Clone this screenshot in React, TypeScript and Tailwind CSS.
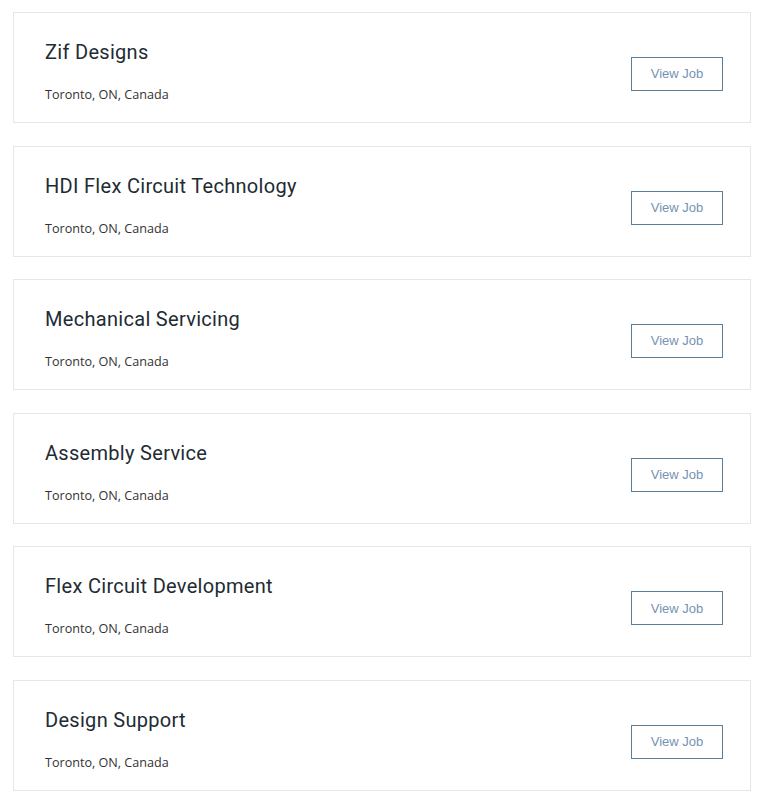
const jobs = [
  "Zif Designs",
  "HDI Flex Circuit Technology",
  "Mechanical Servicing",
  "Assembly Service",
  "Flex Circuit Development",
  "Design Support",
];

export default function App() {
  return (
    <div className="min-h-[800px] bg-white pt-[12px]">
      <div className="ml-[13px] flex w-[738px] flex-col gap-[22.6px]">
        {jobs.map((title) => (
          <div
            key={title}
            className="flex h-[111px] items-start justify-between border border-[#e6e6e6] bg-white pl-[31px] pr-[27px]"
          >
            <div className="pt-[26px]">
              <h2 className="text-[20px] leading-[26px] tracking-[0.3px] text-[#222b33] [font-family:Roboto,sans-serif]">
                {title}
              </h2>
              <p className="mt-[21px] text-[12.6px] leading-[18px] text-[#333] [font-family:'Open_Sans',sans-serif]">
                Toronto, ON, Canada
              </p>
            </div>
            <button className="mt-[44px] h-[34px] w-[92px] border border-[#5a7d99] text-[13px] text-[#7593b2] [font-family:'Liberation_Sans',Arial,sans-serif]">
              View Job
            </button>
          </div>
        ))}
      </div>
    </div>
  );
}
